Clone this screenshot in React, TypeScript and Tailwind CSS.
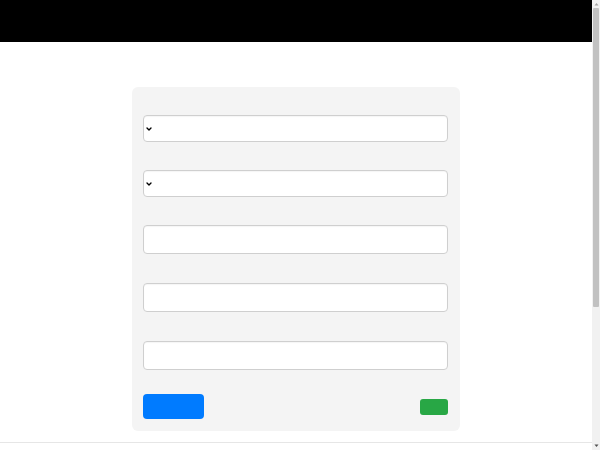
import { ChevronDown } from 'lucide-react'

const fieldCls =
  'block w-full rounded-[4px] border border-[#cfcfcf] bg-white px-2 text-sm outline-none shadow-[inset_0_1px_1px_rgba(0,0,0,0.04)]'

function SelectField() {
  return (
    <div className="relative">
      <select className={`${fieldCls} h-[27px] appearance-none`} defaultValue="">
        <option value=""></option>
      </select>
      <ChevronDown
        size={8}
        strokeWidth={4}
        className="pointer-events-none absolute left-[2px] top-1/2 -translate-y-1/2 text-black"
      />
    </div>
  )
}

function InputField() {
  return <input className={`${fieldCls} h-[29px]`} />
}

// page scrollbar as it shows in the shot
function Scrollbar() {
  return (
    <div className="flex w-[8px] shrink-0 flex-col items-center bg-[#f1f1f1]">
      <svg width="5" height="8" viewBox="0 0 5 8" className="shrink-0">
        <path d="M0.5 5.5L2.5 3L4.5 5.5Z" fill="#a3a3a3" />
      </svg>
      <div className="h-[299px] w-[6px] shrink-0 rounded-[1px] bg-[#c1c1c1]" />
      <div className="flex-1" />
      <svg width="5" height="8" viewBox="0 0 5 8" className="shrink-0">
        <path d="M0.5 2.5L2.5 5L4.5 2.5Z" fill="#505050" />
      </svg>
    </div>
  )
}

export default function App() {
  return (
    <div className="flex h-screen overflow-hidden bg-white font-['Liberation_Sans',sans-serif]">
      <div className="min-w-0 flex-1">
        <header className="h-[42px] bg-black" />
        <main className="flex justify-center pt-[45px]">
          <form className="w-[328px] rounded-[6px] bg-[#f4f4f4] pl-[11px] pr-[12px] pt-[28px] pb-[12px]">
            <div className="flex flex-col">
              <SelectField />
              <div className="mt-[28px]">
                <SelectField />
              </div>
              <div className="mt-[28px]">
                <InputField />
              </div>
              <div className="mt-[29px]">
                <InputField />
              </div>
              <div className="mt-[29px]">
                <InputField />
              </div>
            </div>
            <div className="mt-[24px] flex items-center justify-between">
              <button type="button" className="h-[25px] w-[61px] rounded-[4px] bg-[#007bff]" />
              <button type="button" className="h-[16px] w-[28px] rounded-[3px] bg-[#28a745]" />
            </div>
          </form>
        </main>
        <footer className="mt-[11px] h-[208px] border-t border-[#e6e6e6]" />
      </div>
      <Scrollbar />
    </div>
  )
}
